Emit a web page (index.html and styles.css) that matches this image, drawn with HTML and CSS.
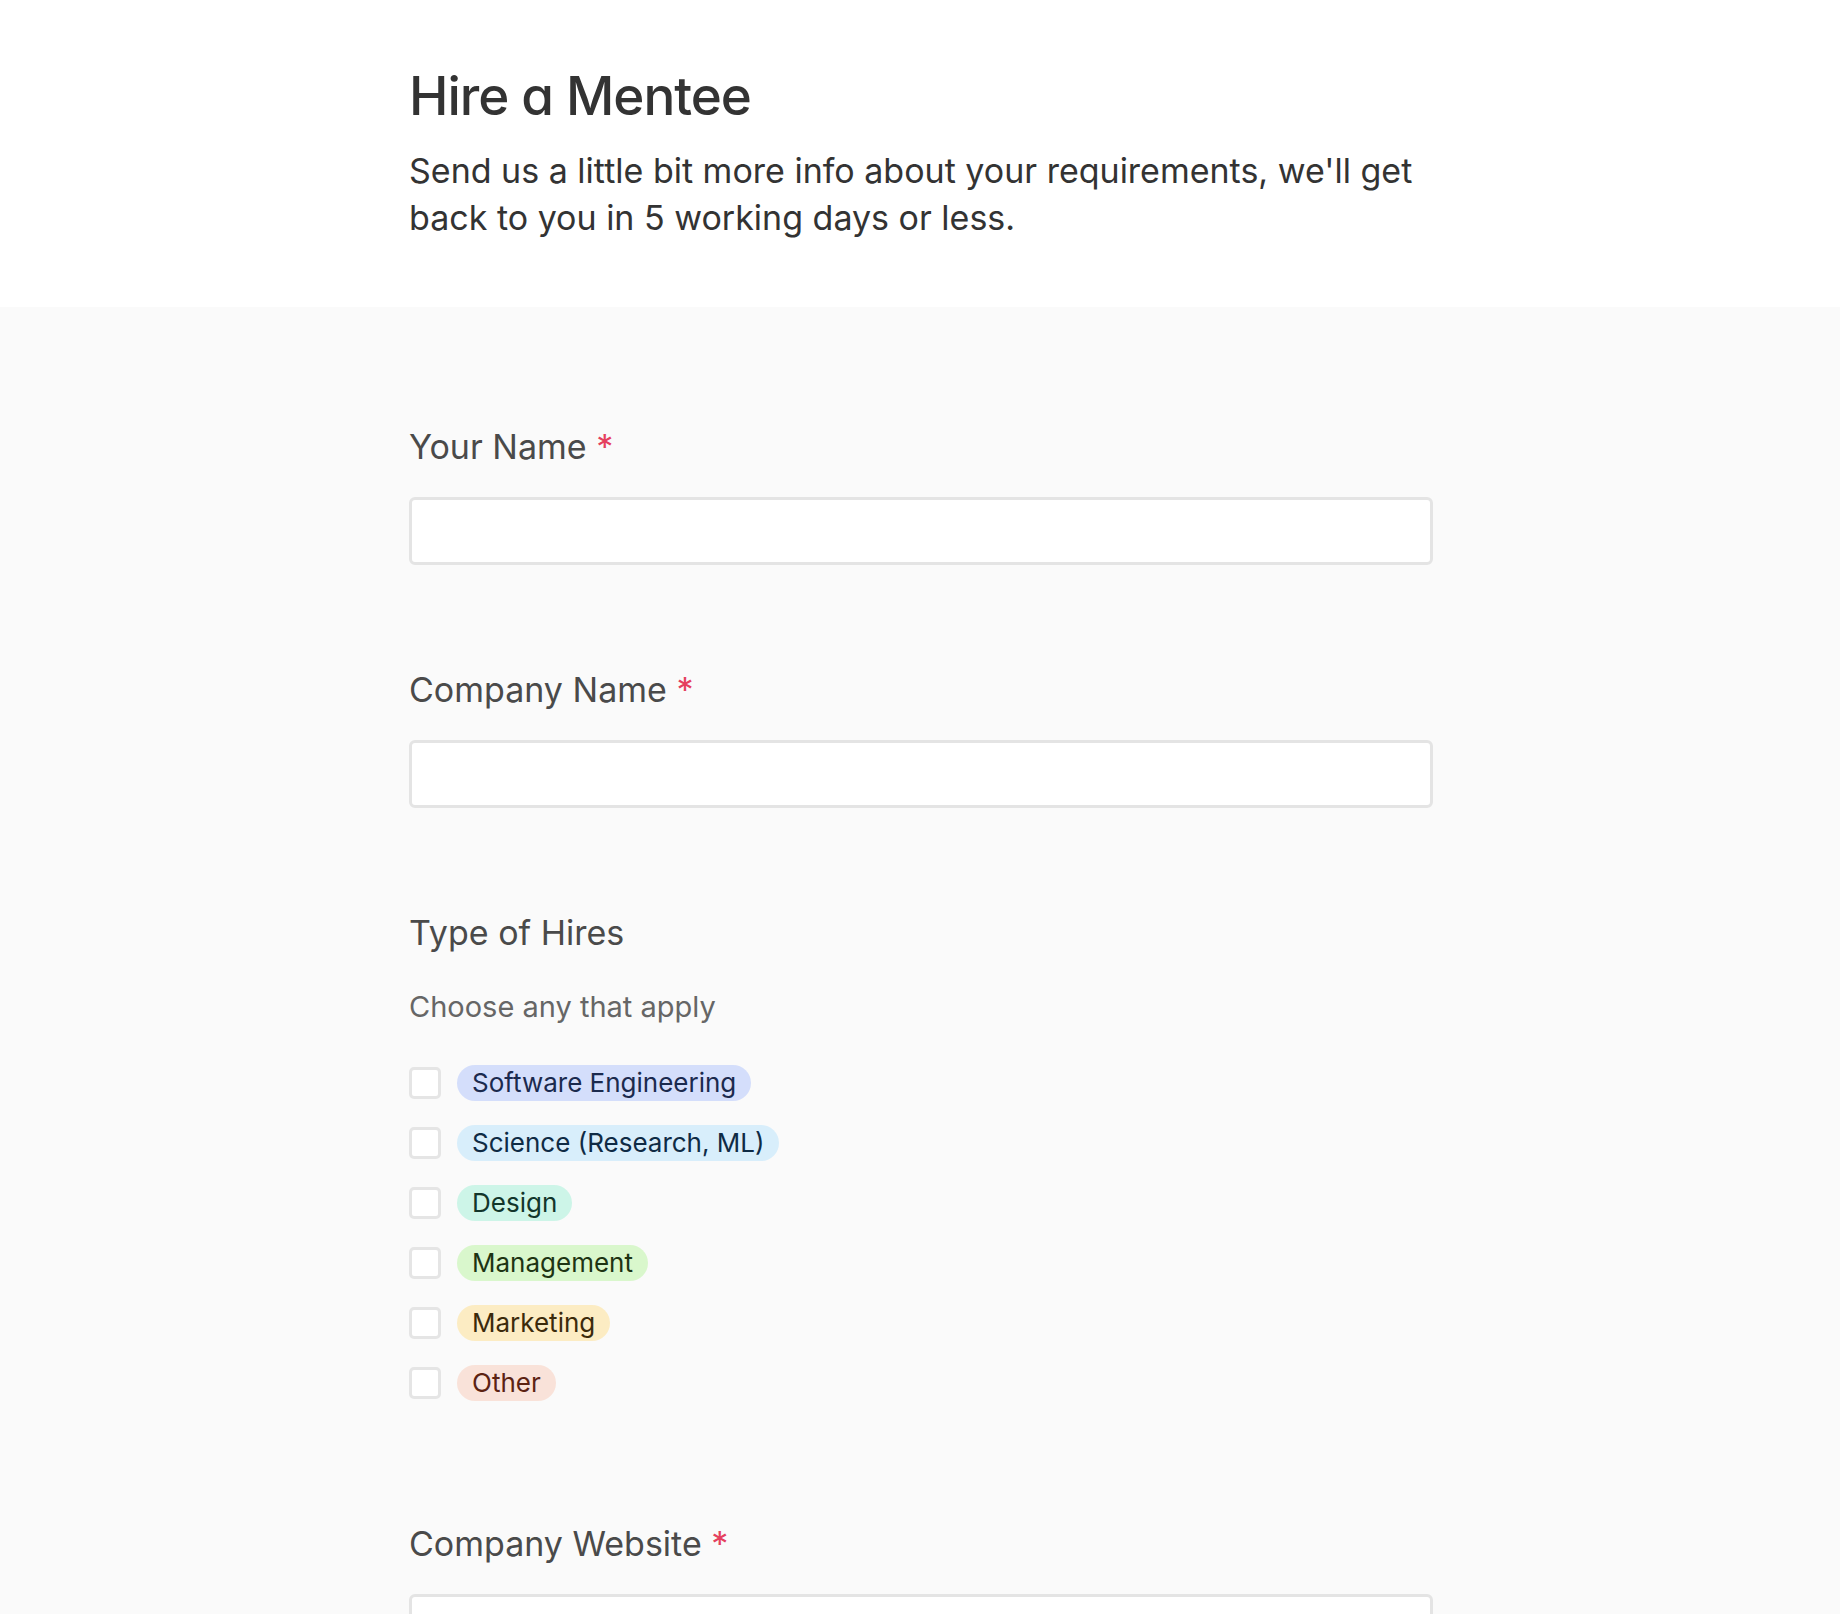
FILE: index.html
```html
<!DOCTYPE html>
<html lang="en">
<head>
<meta charset="utf-8">
<title>Hire a Mentee</title>
<link rel="stylesheet" href="styles.css">
</head>
<body>
<header class="intro">
  <div class="wrap">
    <h1 class="title">Hire a Mentee</h1>
    <p class="lead">Send us a little bit more info about your requirements, we'll get back to you in 5 working days or less.</p>
  </div>
</header>
<main class="form">
  <div class="wrap">
    <div class="field">
      <label class="label" for="name">Your Name <span class="req">*</span></label>
      <input class="input" id="name" type="text">
    </div>
    <div class="field">
      <label class="label" for="company">Company Name <span class="req">*</span></label>
      <input class="input" id="company" type="text">
    </div>
    <div class="field field-choices">
      <div class="label">Type of Hires</div>
      <div class="hint">Choose any that apply</div>
      <ul class="choices">
        <li class="choice"><span class="box"></span><span class="tag tag-blue">Software Engineering</span></li>
        <li class="choice"><span class="box"></span><span class="tag tag-sky">Science (Research, ML)</span></li>
        <li class="choice"><span class="box"></span><span class="tag tag-teal">Design</span></li>
        <li class="choice"><span class="box"></span><span class="tag tag-green">Management</span></li>
        <li class="choice"><span class="box"></span><span class="tag tag-yellow">Marketing</span></li>
        <li class="choice"><span class="box"></span><span class="tag tag-red">Other</span></li>
      </ul>
    </div>
    <div class="field">
      <label class="label" for="website">Company Website <span class="req">*</span></label>
      <input class="input" id="website" type="text">
    </div>
  </div>
</main>
</body>
</html>
```
FILE: styles.css
```css
html, body {
  margin: 0;
  padding: 0;
}
body {
  font-family: Inter, "Noto Sans", sans-serif;
  background: #fafafa;
  color: #333333;
}
.wrap {
  width: 1024px;
  margin-left: calc(50% - 511px);
}
.intro {
  background: #ffffff;
  padding: 60px 0 66px;
}
.title {
  margin: 0;
  font-size: 53px;
  line-height: 72px;
  font-weight: 500;
  letter-spacing: -0.02em;
  color: #333333;
  font-feature-settings: "cv11" 1;
}
.lead {
  margin: 15px 0 0;
  font-size: 34px;
  line-height: 47px;
  color: #333333;
}
.form {
  padding: 120px 0 40px;
}
.field {
  margin-bottom: 105px;
}
.label {
  display: block;
  font-size: 34px;
  line-height: 40px;
  color: #4a4a4a;
  margin-bottom: 30px;
}
.req {
  color: #e5405e;
}
.input {
  display: block;
  box-sizing: border-box;
  width: 100%;
  height: 68px;
  margin: 0;
  padding: 0 18px;
  background: #ffffff;
  border: 3px solid #e4e4e4;
  border-radius: 6px;
  font: inherit;
  outline: none;
}
.field-choices .label {
  margin-bottom: 36px;
}
.hint {
  font-size: 29px;
  line-height: 36px;
  color: #666666;
  margin-bottom: 40px;
}
.field-choices {
  margin-bottom: 123px;
}
.choices {
  list-style: none;
  margin: 0;
  padding: 0;
  display: flex;
  flex-direction: column;
  gap: 24px;
}
.choice {
  display: flex;
  align-items: center;
  gap: 16px;
  height: 36px;
}
.box {
  box-sizing: border-box;
  width: 32px;
  height: 32px;
  background: #ffffff;
  border: 3px solid #e5e5e5;
  border-radius: 5px;
  flex: none;
}
.tag {
  display: inline-block;
  height: 36px;
  line-height: 36px;
  padding: 0 15px;
  border-radius: 18px;
  font-size: 26px;
  white-space: nowrap;
}
.tag-blue { background: #d4defb; color: #1b2a4e; }
.tag-sky { background: #d8eefb; color: #0f2b45; }
.tag-teal { background: #cdf5e8; color: #12362b; }
.tag-green { background: #d9f7cc; color: #1d3413; }
.tag-yellow { background: #fcecc3; color: #3b2a0b; }
.tag-red { background: #f9e2d9; color: #5c2313; }
```
